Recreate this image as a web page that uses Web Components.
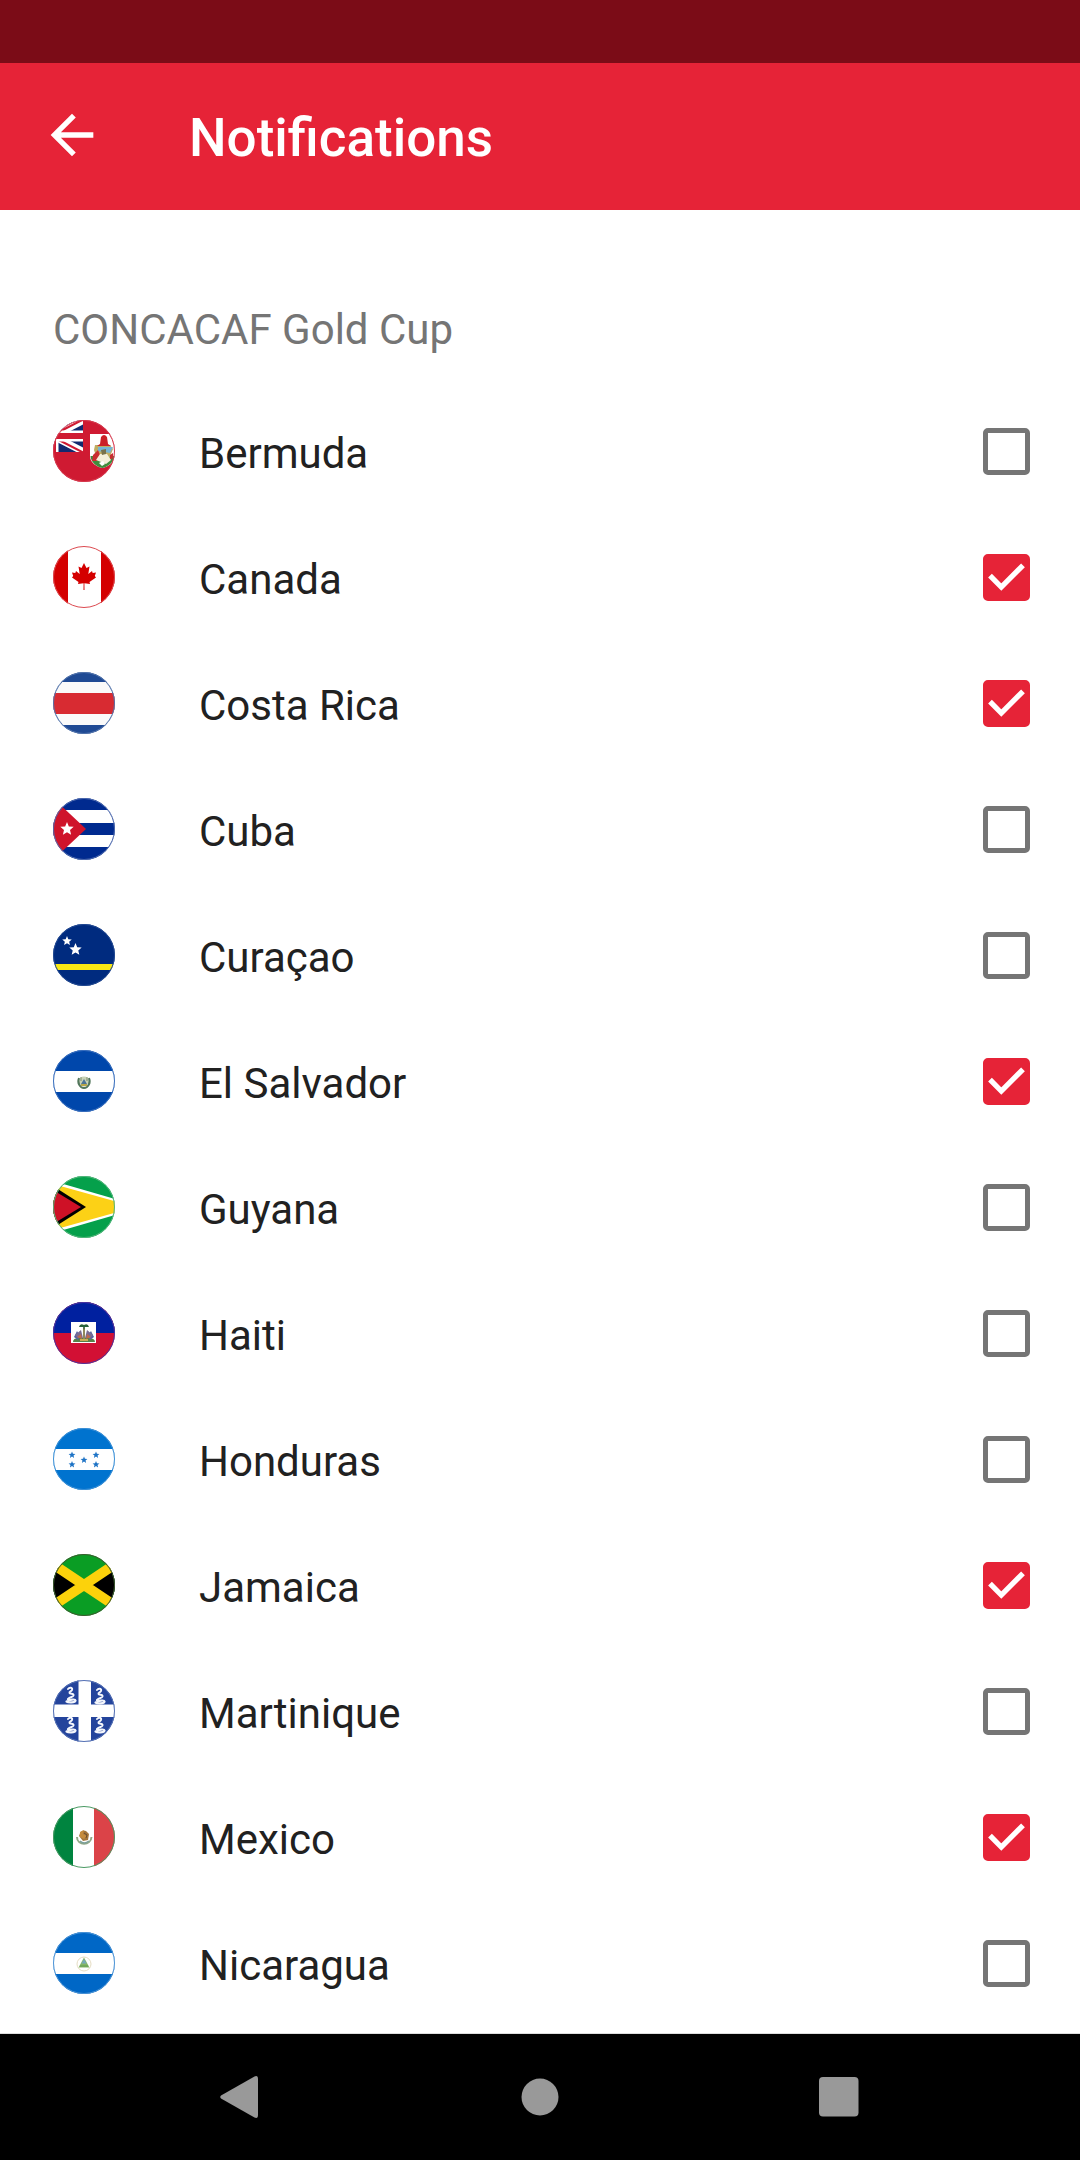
<!DOCTYPE html>
<html lang="en">
<head>
<meta charset="utf-8">
<meta name="viewport" content="width=device-width, initial-scale=1">
<title>Notifications</title>
<style>
  html, body {
    margin: 0;
  }
  body {
    font-family: Roboto, "Liberation Sans", sans-serif;
    background: #fff;
  }
</style>
</head>
<body>
<notifications-page>
  <app-header slot="header">Notifications</app-header>
  <team-group heading="CONCACAF Gold Cup">
    <team-row flag="bermuda">Bermuda</team-row>
    <team-row flag="canada" checked>Canada</team-row>
    <team-row flag="costa-rica" checked>Costa Rica</team-row>
    <team-row flag="cuba">Cuba</team-row>
    <team-row flag="curacao">Curaçao</team-row>
    <team-row flag="el-salvador" checked>El Salvador</team-row>
    <team-row flag="guyana">Guyana</team-row>
    <team-row flag="haiti">Haiti</team-row>
    <team-row flag="honduras">Honduras</team-row>
    <team-row flag="jamaica" checked>Jamaica</team-row>
    <team-row flag="martinique">Martinique</team-row>
    <team-row flag="mexico" checked>Mexico</team-row>
    <team-row flag="nicaragua">Nicaragua</team-row>
  </team-group>
  <system-nav slot="footer"></system-nav>
</notifications-page>

<script>
// five pointed star, centered on x,y
const star = (x, y, r, fill = '#fff') => {
  const points = [];
  for (let i = 0; i < 10; i++) {
    const a = Math.PI * i / 5 - Math.PI / 2;
    const d = i % 2 ? r * 0.45 : r;
    points.push(`${(x + d * Math.cos(a)).toFixed(2)},${(y + d * Math.sin(a)).toFixed(2)}`);
  }
  return `<polygon points="${points.join(' ')}" fill="${fill}"/>`;
};

const snake = (x, y) => `
  <g transform="translate(${x} ${y})" fill="none" stroke="#f4f6fb" stroke-linecap="round" stroke-linejoin="round">
    <path d="M-3 -6C-1.500 -8 2 -7.500 1 -5C0.500 -3.500 -2 -3.500 -1.500 -2C-1 -0.500 3 -2 2.500 0.500C2 2.500 -3 2 -3 4.500" stroke-width="2"/>
    <path d="M-3 4.500C-1 6 4 3 4.500 5.500C4 8 -3 7.500 -4.500 6.500" stroke-width="2.200"/>
  </g>`;

// every flag is drawn on a 62 x 62 canvas, the ring colour comes last
const FLAGS = {
  'bermuda': [`
    <rect width="62" height="62" fill="#cf1a32"/>
    <svg width="30" height="32">
      <rect width="31" height="32" fill="#12296f"/>
      <path d="M-31 0L31 32M-31 32L31 0" stroke="#fff" stroke-width="7"/>
      <path d="M0 17L31 33M0 15L31 -1" stroke="#cf1a32" stroke-width="2"/>
      <path d="M0 16H31M0 0V32" stroke="#fff" stroke-width="11"/>
      <path d="M0 16H31M0 0V32" stroke="#cf1a32" stroke-width="6"/>
    </svg>
    <path d="M37 14H62V36C62 43 54 47 49.500 48C44 47 37 43 37 36Z" fill="#fff"/>
    <path d="M37.500 36H61.500C61 43 54 47 49.500 48C44 47 38 43 37.500 36Z" fill="#3f8c3c"/>
    <path d="M42 25L57 25L60 29L56 39L44 39L41 30Z" fill="#bfae63"/>
    <path d="M45 27H60L57 33L45 31Z" fill="#75b5d5"/>
    <path d="M47 24L48 17Q51 13 54 17L55 24L58 26H44Z" fill="#cb2026"/>
    <path d="M40 35L45 30L47 35L44 41L39 41ZM57 35L60 33L60 38L57 40Z" fill="#c92d2f"/>
    <path d="M43 40L47 34L54 34L58 40L53 44L48 42Z" fill="#f3efd9"/>
    <path d="M48 30L53 29L53 34L49 35Z" fill="#77724b"/>
    <path d="M46 43L50 41L52 44L49 46Z" fill="#fff"/>`, '#d63a4e'],
  'canada': [`
    <rect width="62" height="62" fill="#fff"/>
    <path d="M0 0H15V62H0ZM48 0H62V62H48Z" fill="#d40000"/>
    <path d="M31 17L33.500 22L36.500 20.500L35.300 28L39 25L39.700 27L43 26.500L41.800 30L43 31.500L36.500 36L37 38L31.400 37.200L31.500 44H30.500L30.600 37.200L25 38L25.500 36L19 31.500L20.200 30L19 26.500L22.300 27L23 25L26.700 28L25.500 20.500L28.500 22Z" fill="#d40000"/>`, '#dc4a50'],
  'costa-rica': [`
    <rect width="62" height="62" fill="#1f4a94"/>
    <rect y="10" width="62" height="43" fill="#fafafa"/>
    <rect y="21" width="62" height="21" fill="#d82b32"/>`, '#5374ab'],
  'cuba': [`
    <rect width="62" height="62" fill="#002a8f"/>
    <path d="M0 12H62V25H0ZM0 37H62V49H0Z" fill="#fff"/>
    <path d="M0 0L33 31L0 62Z" fill="#cf142b"/>
    ${star(14, 31, 7)}`, '#4f6bae'],
  'curacao': [`
    <rect width="62" height="62" fill="#002b7f"/>
    <rect y="40" width="62" height="6" fill="#f9e814"/>
    ${star(14, 17, 5)}
    ${star(22.5, 25.5, 6.5)}`, '#234a92'],
  'el-salvador': [`
    <rect width="62" height="62" fill="#0047ab"/>
    <rect y="21" width="62" height="21" fill="#fff"/>
    <circle cx="31" cy="31.500" r="5" fill="#c9d3b8"/>
    <path d="M26 28C24 33 27 38 31 38S38 33 36 28" fill="none" stroke="#52765b" stroke-width="2"/>
    <path d="M28 34L31 29L34 34Z" fill="#4d7597"/>
    <path d="M28 27V31M34 27V31" stroke="#7a8c6c"/>
    <path d="M28 35H34" stroke="#b9a74a" stroke-width="2"/>`, '#3a6fbd'],
  'guyana': [`
    <rect width="62" height="62" fill="#05a04b"/>
    <path d="M0 5L90 31L0 57Z" fill="#fff"/>
    <path d="M0 8L83 31L0 54Z" fill="#fcd116"/>
    <path d="M0 10L33 31L0 52Z" fill="#000"/>
    <path d="M0 14L28 31L0 48Z" fill="#ce1126"/>`, '#55b57b'],
  'haiti': [`
    <rect width="62" height="62" fill="#d21034"/>
    <rect width="62" height="31" fill="#00209f"/>
    <rect x="18" y="20" width="25" height="21" fill="#fff"/>
    <path d="M20 40Q20 36 26 36H35Q42 36 42 40Z" fill="#568348"/>
    <path d="M21 35L24 29L27 34L25 38ZM35 33L38 29L41 35L37 38Z" fill="#5b62a0"/>
    <path d="M22 33L28 28L30 36L25 36ZM40 33L34 28L32 36L37 36Z" fill="#7b6c92"/>
    <path d="M24 35L28 32L29 37ZM38 35L34 32L33 37Z" fill="#c06a4b"/>
    <path d="M27 38H35" stroke="#c9ae55" stroke-width="2"/>
    <path d="M31 26V37" stroke="#92885c" stroke-width="2"/>
    <path d="M26 25Q27 21 31 23Q35 21 36 25L32 25L31 28L30 25Z" fill="#28613b"/>`, '#4b35a0'],
  'honduras': [`
    <rect width="62" height="62" fill="#0073cf"/>
    <rect y="21" width="62" height="21" fill="#fff"/>
    ${[[19, 27], [43, 27], [31, 32], [19, 36.5], [43, 36.5]].map(([x, y]) => star(x, y, 3.6, '#1f74c6')).join('')}`, '#3d90d6'],
  'jamaica': [`
    <rect width="62" height="62" fill="#0a9d24"/>
    <path d="M0 10L31 31L0 52ZM62 10L31 31L62 52Z" fill="#000"/>
    <path d="M-5 7L67 55M-5 55L67 7" stroke="#fcd20b" stroke-width="10"/>`, '#3f5a30'],
  'martinique': [`
    <rect width="62" height="62" fill="#24449c"/>
    <path d="M25.500 0H38V24.500H62V37H38V62H25.500V37H0V24.500H25.500Z" fill="#fff"/>
    ${snake(18, 15)}${snake(47, 16)}${snake(18, 45)}${snake(47, 45)}`, '#5370b4'],
  'mexico': [`
    <rect width="62" height="62" fill="#fff"/>
    <rect width="20" height="62" fill="#00843f"/>
    <rect x="41" width="21" height="62" fill="#db4348"/>
    <path d="M24 31C24 40 38 40 38.500 31" fill="none" stroke="#91a886" stroke-width="2"/>
    <path d="M27 35Q31 39 36 35" fill="none" stroke="#7b9f9b" stroke-width="1.500"/>
    <path d="M26 30Q28 23 33 25L36 28L35 34L30 35Z" fill="#a4763c"/>
    <path d="M27 26L31 24L30 28L34 30L31 33L27 31Z" fill="#c58b3c"/>
    <path d="M31 27L34 29L33 32" fill="none" stroke="#6b4d2d"/>`, '#4a9a63'],
  'nicaragua': [`
    <rect width="62" height="62" fill="#0067c6"/>
    <rect y="21" width="62" height="21" fill="#fff"/>
    <circle cx="31" cy="32" r="7" fill="none" stroke="#e5dcc2"/>
    <path d="M31 25.500L36.500 35.500H25.500Z" fill="#86b568"/>
    <path d="M31 27L33.500 31.500H28.500Z" fill="#76a9bd"/>
    <path d="M27 34H35" stroke="#609d50"/>`, '#4b93d5'],
};

class TeamFlag extends HTMLElement {
  connectedCallback() {
    if (this.shadowRoot) return;
    const [art, ring] = FLAGS[this.getAttribute('name')];
    this.attachShadow({ mode: 'open' }).innerHTML = `
      <style>
        :host {
          display: block;
          flex: none;
          width: 62px;
          height: 62px;
        }
        svg {
          display: block;
        }
      </style>
      <svg width="62" height="62" viewBox="0 0 62 62" aria-hidden="true">
        <clipPath id="disc"><circle cx="31" cy="31" r="31"/></clipPath>
        <g clip-path="url(#disc)">${art}</g>
        <circle cx="31" cy="31" r="30.500" fill="none" stroke="${ring}"/>
      </svg>`;
  }
}

class TeamRow extends HTMLElement {
  connectedCallback() {
    if (this.shadowRoot) return;
    this.attachShadow({ mode: 'open' }).innerHTML = `
      <style>
        :host {
          display: flex;
          align-items: center;
          height: 126px;
          padding: 0 50px 0 53px;
        }
        label {
          flex: 1;
          display: flex;
          align-items: center;
          gap: 84px;
          color: #212121;
          font-size: 42px;
          line-height: 50px;
        }
        span {
          padding-top: 6px;
        }
        .check {
          display: grid;
        }
        input, svg {
          grid-area: 1 / 1;
          width: 47px;
          height: 47px;
        }
        input {
          appearance: none;
          box-sizing: border-box;
          margin: 0;
          border: 5px solid #757575;
          border-radius: 5px;
        }
        input:checked {
          background: #e62337;
          border-color: #e62337;
        }
        svg {
          visibility: hidden;
          pointer-events: none;
        }
        input:checked + svg {
          visibility: visible;
        }
      </style>
      <label for="box">
        <team-flag name="${this.getAttribute('flag')}"></team-flag>
        <span><slot></slot></span>
      </label>
      <div class="check">
        <input type="checkbox" id="box" ${this.hasAttribute('checked') ? 'checked' : ''}>
        <svg viewBox="0 0 47 47" fill="none" aria-hidden="true">
          <path d="M7 21.700L18.300 33L40 11.300" stroke="#fff" stroke-width="5.300"/>
        </svg>
      </div>`;
  }
}

class TeamGroup extends HTMLElement {
  connectedCallback() {
    if (this.shadowRoot) return;
    this.attachShadow({ mode: 'open' }).innerHTML = `
      <style>
        :host {
          display: block;
        }
        h2 {
          margin: 0;
          padding: 95px 53px 33px;
          color: #757575;
          font-size: 42px;
          font-weight: 400;
          line-height: 50px;
        }
      </style>
      <h2>${this.getAttribute('heading')}</h2>
      <slot></slot>`;
  }
}

class AppHeader extends HTMLElement {
  constructor() {
    super();
    this.attachShadow({ mode: 'open' }).innerHTML = `
      <style>
        :host {
          display: block;
          background: #e62337;
          color: #fff;
        }
        .status {
          height: 63px;
          background: #7b0c17;
        }
        .bar {
          display: flex;
          align-items: center;
          gap: 85px;
          height: 144px;
          padding: 0 40px 3px;
        }
        button {
          padding: 0;
          border: 0;
          background: none;
          color: inherit;
        }
        svg {
          display: block;
        }
        h1 {
          margin: 0;
          padding-top: 6px;
          font-size: 53px;
          font-weight: 500;
          line-height: 60px;
        }
      </style>
      <div class="status"></div>
      <div class="bar">
        <button type="button" aria-label="Back">
          <svg width="64" height="64" viewBox="0 0 24 24" fill="currentColor">
            <path d="M20 11H7.830l5.590-5.590L12 4l-8 8 8 8 1.410-1.410L7.830 13H20v-2z"/>
          </svg>
        </button>
        <h1><slot></slot></h1>
      </div>`;
  }
}

class SystemNav extends HTMLElement {
  constructor() {
    super();
    this.attachShadow({ mode: 'open' }).innerHTML = `
      <style>
        :host {
          display: flex;
          justify-content: center;
          height: 126px;
          border-top: 1px solid #dedede;
          background: #000;
        }
        button {
          display: grid;
          place-items: center;
          width: 299px;
          padding: 0;
          border: 0;
          background: none;
          color: #999;
        }
      </style>
      <button type="button" aria-label="Back">
        <svg width="44" height="44" viewBox="0 0 44 44" fill="currentColor">
          <path d="M2 20.500L35.500 1.500Q39 0 39 4V40Q39 44 35.500 42.500L2 23.500Q0.500 22 2 20.500Z"/>
        </svg>
      </button>
      <button type="button" aria-label="Home">
        <svg width="44" height="44" viewBox="0 0 44 44" fill="currentColor">
          <circle cx="22" cy="22" r="18.500"/>
        </svg>
      </button>
      <button type="button" aria-label="Overview">
        <svg width="44" height="44" viewBox="0 0 44 44" fill="currentColor">
          <rect x="2" y="2" width="39.500" height="39.500" rx="4"/>
        </svg>
      </button>`;
  }
}

class NotificationsPage extends HTMLElement {
  constructor() {
    super();
    this.attachShadow({ mode: 'open' }).innerHTML = `
      <style>
        :host {
          display: flex;
          flex-direction: column;
          min-height: 100vh;
        }
        main {
          flex: 1;
        }
      </style>
      <slot name="header"></slot>
      <main><slot></slot></main>
      <slot name="footer"></slot>`;
  }
}

customElements.define('team-flag', TeamFlag);
customElements.define('team-row', TeamRow);
customElements.define('team-group', TeamGroup);
customElements.define('app-header', AppHeader);
customElements.define('system-nav', SystemNav);
customElements.define('notifications-page', NotificationsPage);
</script>
</body>
</html>
